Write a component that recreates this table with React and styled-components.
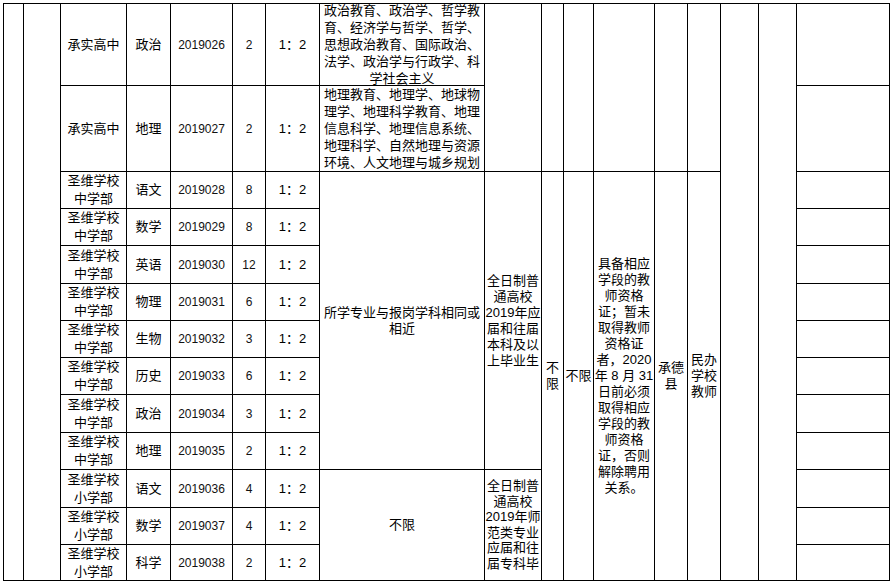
import React from "react";
import styled, { createGlobalStyle } from "styled-components";

const Global = createGlobalStyle`
  html, body { margin: 0; padding: 0; background: #fff; }
  body { font-family: "Liberation Sans", "Noto Sans CJK SC", sans-serif; color: #000; }
`;

const COLS = [20, 37, 66, 44, 62, 33, 54, 165, 57, 22, 30, 61, 33, 33, 38, 38, 93];
const ROWS = [82, 86, 37, 37, 38, 37, 37, 37, 38, 37, 38, 37, 36];

const Sheet = styled.div`
  display: grid;
  width: max-content;
  margin: 3px 0 0 3px;
  grid-template-columns: ${COLS.map((w) => w + "px").join(" ")};
  grid-template-rows: ${ROWS.map((h) => h + "px").join(" ")};
  border-top: 1px solid #000;
  border-left: 1px solid #000;
`;

const Cell = styled.div`
  grid-column: ${(p) => p.$c} / span ${(p) => p.$cs || 1};
  grid-row: ${(p) => p.$r} / span ${(p) => p.$rs || 1};
  border-right: 1px solid #000;
  border-bottom: 1px solid #000;
  display: flex;
  flex-direction: column;
  align-items: center;
  justify-content: ${(p) => (p.$top ? "flex-start" : "center")};
  padding-top: ${(p) => p.$pt || 0}px;
  overflow: hidden;
  box-sizing: border-box;
  text-align: center;
  font-size: ${(p) => p.$fs || 13}px;
  line-height: ${(p) => p.$lh || 16}px;
  color: #000;
`;

const Line = styled.span`
  display: block;
  white-space: nowrap;
`;

const Num = styled.span`
  font-family: "Liberation Sans", sans-serif;
  font-size: 12px;
  color: #111;
`;

const Lines = ({ items }) => items.map((t, i) => <Line key={i}>{t}</Line>);

const upper = [
  {
    school: ["承实高中"],
    subject: "政治",
    code: "2019026",
    count: "2",
    majors: [
      "政治教育、政治学、哲学教",
      "育、经济学与哲学、哲学、",
      "思想政治教育、国际政治、",
      "法学、政治学与行政学、科",
      "学社会主义",
    ],
  },
  {
    school: ["承实高中"],
    subject: "地理",
    code: "2019027",
    count: "2",
    majors: [
      "地理教育、地理学、地球物",
      "理学、地理科学教育、地理",
      "信息科学、地理信息系统、",
      "地理科学、自然地理与资源",
      "环境、人文地理与城乡规划",
    ],
  },
];

const lower = [
  ["中学部", "语文", "2019028", "8"],
  ["中学部", "数学", "2019029", "8"],
  ["中学部", "英语", "2019030", "12"],
  ["中学部", "物理", "2019031", "6"],
  ["中学部", "生物", "2019032", "3"],
  ["中学部", "历史", "2019033", "6"],
  ["中学部", "政治", "2019034", "3"],
  ["中学部", "地理", "2019035", "2"],
  ["小学部", "语文", "2019036", "4"],
  ["小学部", "数学", "2019037", "4"],
  ["小学部", "科学", "2019038", "2"],
];

const cert = [
  "具备相应",
  "学段的教",
  "师资格",
  "证；暂未",
  "取得教师",
  "资格证",
  "者，2020",
  "年 8 月 31",
  "日前必须",
  "取得相应",
  "学段的教",
  "师资格",
  "证，否则",
  "解除聘用",
  "关系。",
];

export default function App() {
  const cells = [];
  // whole-height side columns
  cells.push(<Cell key="a" $c={1} $r={1} $rs={13} />);
  cells.push(<Cell key="b" $c={2} $r={1} $rs={13} />);
  cells.push(<Cell key="o" $c={15} $r={1} $rs={13} />);
  cells.push(<Cell key="p" $c={16} $r={1} $rs={13} />);

  upper.forEach((r, i) => {
    const row = i + 1;
    cells.push(
      <Cell key={"s" + row} $c={3} $r={row}>
        <Lines items={r.school} />
      </Cell>,
      <Cell key={"j" + row} $c={4} $r={row}>{r.subject}</Cell>,
      <Cell key={"c" + row} $c={5} $r={row}><Num>{r.code}</Num></Cell>,
      <Cell key={"n" + row} $c={6} $r={row}><Num>{r.count}</Num></Cell>,
      <Cell key={"q" + row} $c={7} $r={row}>1：2</Cell>,
      <Cell key={"m" + row} $c={8} $r={row} $lh={17}>
        <Lines items={r.majors} />
      </Cell>,
      <Cell key={"z" + row} $c={17} $r={row} />
    );
  });
  // merged blanks for top two rows
  [9, 10, 11, 12, 13, 14].forEach((c) =>
    cells.push(<Cell key={"t" + c} $c={c} $r={1} $rs={2} />)
  );

  lower.forEach((r, i) => {
    const row = i + 3;
    cells.push(
      <Cell key={"s" + row} $c={3} $r={row} $lh={18}>
        <Lines items={["圣维学校", r[0]]} />
      </Cell>,
      <Cell key={"j" + row} $c={4} $r={row}>{r[1]}</Cell>,
      <Cell key={"c" + row} $c={5} $r={row}><Num>{r[2]}</Num></Cell>,
      <Cell key={"n" + row} $c={6} $r={row}><Num>{r[3]}</Num></Cell>,
      <Cell key={"q" + row} $c={7} $r={row}>1：2</Cell>,
      <Cell key={"z" + row} $c={17} $r={row} />
    );
  });

  cells.push(
    <Cell key="maj1" $c={8} $r={3} $rs={8}>
      <Lines items={["所学专业与报岗学科相同或", "相近"]} />
    </Cell>,
    <Cell key="edu1" $c={9} $r={3} $rs={8}>
      <Lines items={["全日制普", "通高校", "2019年应", "届和往届", "本科及以", "上毕业生"]} />
    </Cell>,
    <Cell key="maj2" $c={8} $r={11} $rs={3}>不限</Cell>,
    <Cell key="edu2" $c={9} $r={11} $rs={3} $top $pt={8} $lh={15.6}>
      <Lines items={["全日制普", "通高校", "2019年师", "范类专业", "应届和往", "届专科毕"]} />
    </Cell>,
    <Cell key="age" $c={10} $r={3} $rs={11}>
      <Lines items={["不", "限"]} />
    </Cell>,
    <Cell key="sex" $c={11} $r={3} $rs={11}>不限</Cell>,
    <Cell key="cert" $c={12} $r={3} $rs={11}>
      <Lines items={cert} />
    </Cell>,
    <Cell key="area" $c={13} $r={3} $rs={11}>
      <Lines items={["承德", "县"]} />
    </Cell>,
    <Cell key="kind" $c={14} $r={3} $rs={11}>
      <Lines items={["民办", "学校", "教师"]} />
    </Cell>
  );

  return (
    <>
      <Global />
      <Sheet>{cells}</Sheet>
    </>
  );
}
